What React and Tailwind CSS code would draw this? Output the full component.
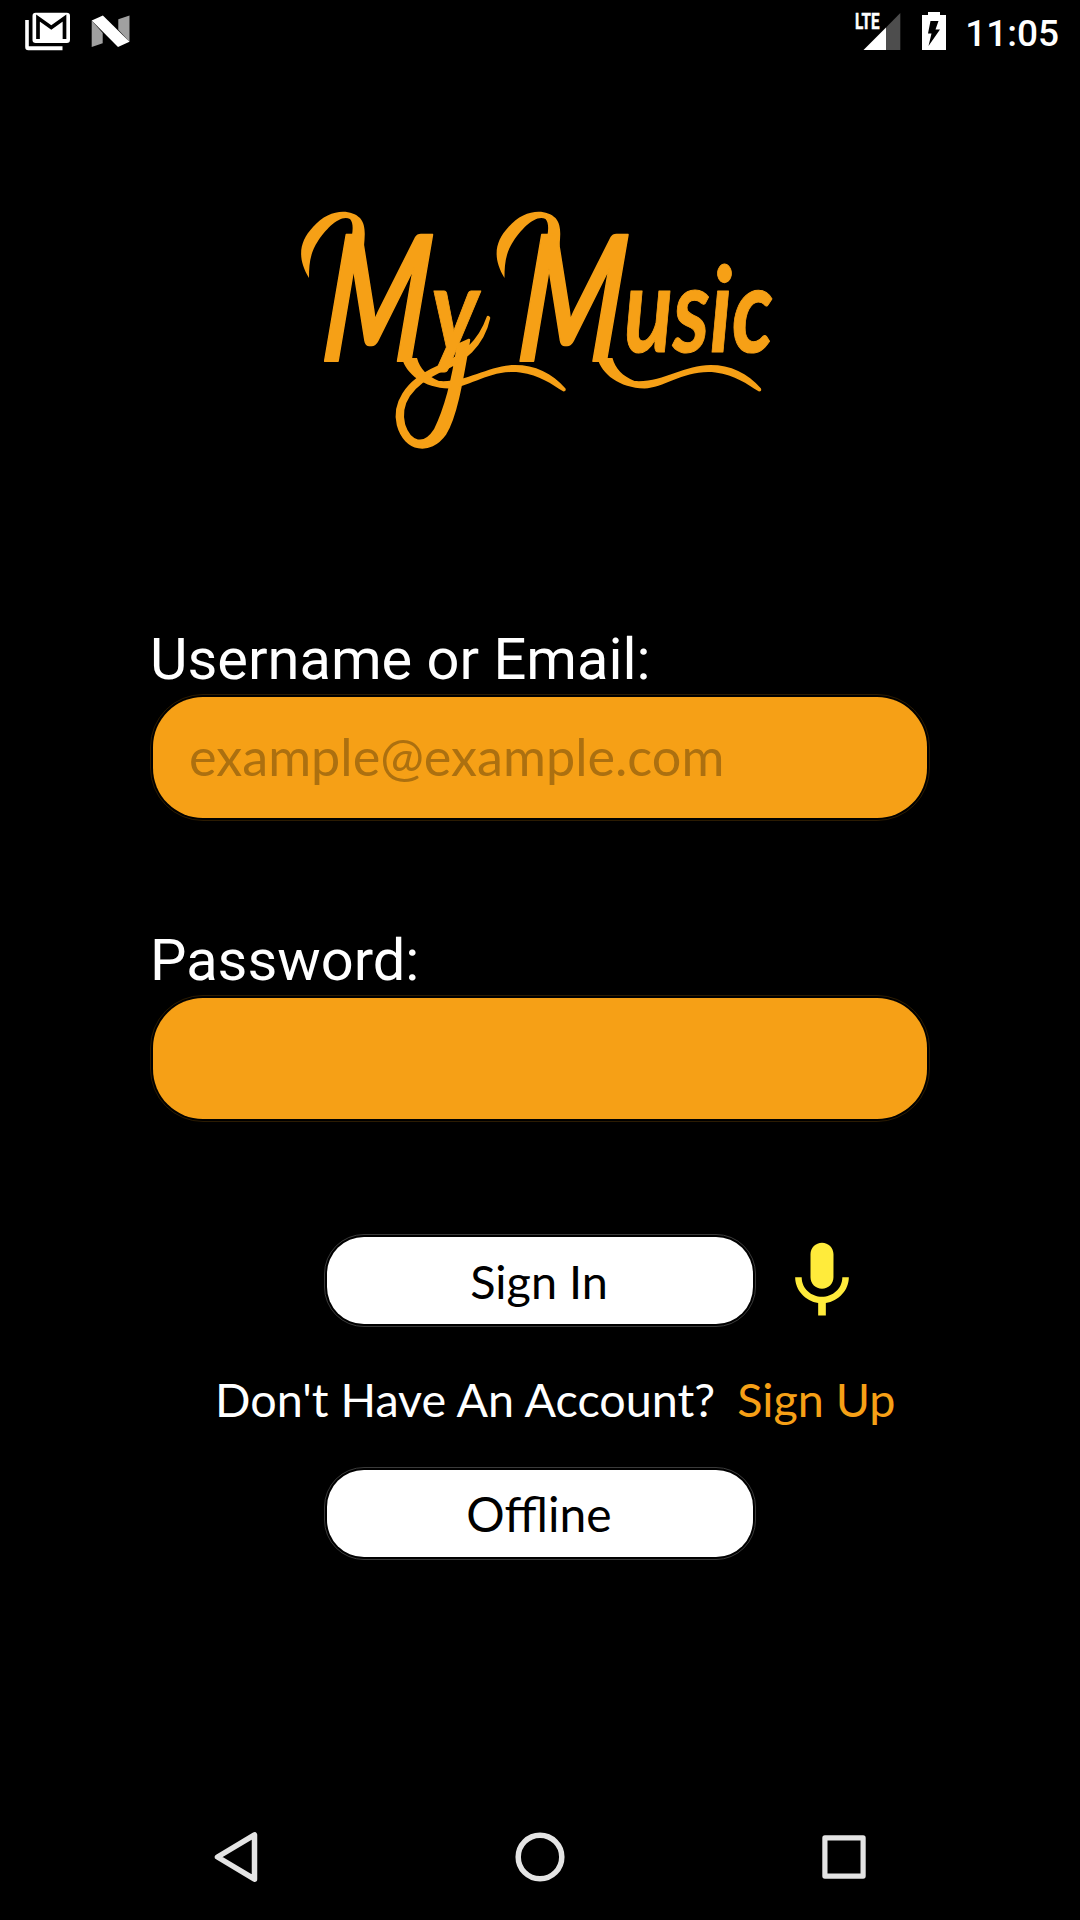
import React from "react";

function StatusBar() {
  return (
    <header className="flex h-16 items-start justify-between pl-[25px] pr-[21px]">
      <div className="flex pt-3">
        <svg width="46" height="40" viewBox="25 12 46 40" aria-label="Mail">
          <path d="M25.2 20h3.6v26.2h33.7v4H28.4q-3.2 0-3.2-3.2z" fill="#fff" />
          <rect x="32.5" y="12.7" width="37.5" height="30.3" rx="3.2" fill="#fff" />
          <path d="M38 39V18l13.3 9.5L64.500 18v21" fill="none" stroke="#000" strokeWidth="3.7" />
        </svg>
        <svg className="ml-5" width="39" height="40" viewBox="91 12 39 40" aria-label="System">
          <path d="M91.700 20.500l11 12.500v10.300l-11 3.700zM118.300 19.300l11.200-3.800v26.300l-11.200-12z" fill="#a0a0a0" />
          <path d="M91.700 20.500l11.200-5 26.600 26.300-11.500 5.200z" fill="#fff" />
        </svg>
      </div>
      <div className="flex pt-3">
        <svg className="overflow-visible" width="48" height="40" viewBox="854 12 48 40" aria-label="LTE signal">
          <path d="M863.500 50L886 27.500V50z" fill="#fff" />
          <path d="M886 27.500L900.300 13v37H886z" fill="#4d4d4d" />
          <text x="855" y="29.200" textLength="24.500" lengthAdjust="spacingAndGlyphs" fill="#fff" stroke="#fff" strokeWidth=".5" className="font-['Roboto'] text-[22px] font-bold">LTE</text>
        </svg>
        <svg className="ml-5" width="24" height="40" viewBox="922 12 24 40" aria-label="Charging">
          <path d="M922 15h6v-3h12v3h6v35h-24z" fill="#fff" />
          <path d="M930.500 21h8l-3 8.500h4.500L928.500 46l3-12.500h-3.500z" fill="#000" />
        </svg>
        <span className="ml-[19px] whitespace-nowrap font-['Roboto',sans-serif] text-[37px] font-medium leading-[44px]">11:05</span>
      </div>
    </header>
  );
}

const swash = "M402 358C406 374 424 388 449 388.500C469 388 490 369 520 372.500C540 375 551 384 563.500 391.500Q566.500 391.500 565.500 388.500C552 373 535 365 515 365C489 365 466 383 439 381C427 376 420 369 417 358Z";
const curl = "M309 278C297 258 299 242 313 227C328 209 350 208 360 218C366 225 365 235 364 246L350 244C353 233 354 223 350 219C340 214 326 229 318 241C310 253 309 264 309 278Z";

function Logo() {
  return (
    <svg className="overflow-visible" width="500" height="260" viewBox="290 200 500 260" fill="#f6a016" aria-label="My Music">
      <path d={curl} />
      <path d={curl} transform="translate(195.500 0)" />
      <path d={swash} />
      <path d={swash} transform="translate(195.500 0)" />
      <path d="M488 317C479 343 462 356 438 367C404 382 393 405 398 425C405 451 430 455 445 434C456 417 462 380 469 340L458 345C453 380 446 408 435 430C424 447 410 443 404 425C399 405 409 386 440 371C464 361 483 346 489 318Z" stroke="#f6a016" strokeWidth="2.500" strokeLinejoin="round" />
      <g className="font-['Lato',sans-serif] font-bold italic" stroke="#f6a016" strokeLinejoin="round">
        <text transform="translate(320 361) skewX(-5) scale(.66 .97)" strokeWidth="2" className="text-[180px]">M</text>
        <text transform="translate(431 352) scale(.82 1)" strokeWidth="1" className="text-[118px]">y</text>
        <text transform="translate(515.500 361) skewX(-5) scale(.66 .97)" strokeWidth="2" className="text-[180px]">M</text>
        <text transform="translate(624 352)" textLength="149" lengthAdjust="spacingAndGlyphs" strokeWidth="1" className="text-[118px]">usic</text>
      </g>
    </svg>
  );
}

function Field({ label, type, placeholder }) {
  return (
    <label className="block">
      <span className="block h-[66px] whitespace-nowrap pt-[2px] font-['Roboto',sans-serif] text-[57.8px] leading-[66px]">{label}</span>
      <span className="mt-1 block h-[127px] rounded-[53px] border border-[#2b1b02] p-[2px]">
        <input
          type={type}
          placeholder={placeholder}
          className="block h-full w-full rounded-[50px] bg-[#f6a016] pb-[5px] pl-[36px] font-['Lato',sans-serif] text-[52.2px] text-black outline-none placeholder:text-[#ac7010] placeholder:opacity-100"
        />
      </span>
    </label>
  );
}

function PillButton({ children }) {
  return (
    <div className="h-[93px] w-[432px] rounded-[40px] border border-[#3a3a3a] p-[2px]">
      <button className="block h-full w-full rounded-[37px] bg-white pr-[2px] pt-px font-['Lato',sans-serif] text-[46.8px] leading-none text-black">{children}</button>
    </div>
  );
}

function NavBar() {
  return (
    <nav className="mt-auto flex h-[126px] items-center justify-between px-[210px]">
      <svg width="50" height="54" viewBox="210 1830 50 54" fill="none" stroke="#e4e4e4" strokeWidth="5.500" strokeLinejoin="round">
        <path d="M254.500 1834.800v44.400L217.500 1857z" />
      </svg>
      <svg width="54" height="54" viewBox="0 0 54 54" fill="none" stroke="#e4e4e4" strokeWidth="5.500">
        <circle cx="27" cy="27" r="21.800" />
      </svg>
      <svg width="50" height="54" viewBox="820 1830 50 54" fill="none" stroke="#e4e4e4" strokeWidth="5.200" strokeLinejoin="round">
        <rect x="824.900" y="1837.900" width="38.200" height="38.200" />
      </svg>
    </nav>
  );
}

export default function App() {
  return (
    <main className="flex h-[1920px] w-[1080px] flex-col overflow-hidden bg-black text-white">
      <StatusBar />
      <div className="mt-[136px] flex h-[260px] justify-center">
        <Logo />
      </div>
      <form className="mx-[150px] mt-[164px] flex flex-col gap-[104px]" onSubmit={(e) => e.preventDefault()}>
        <Field label="Username or Email:" type="text" placeholder="example@example.com" />
        <Field label="Password:" type="password" />
      </form>
      <div className="mt-[112px] flex h-[93px] pl-[324px]">
        <PillButton>Sign In</PillButton>
        <svg className="ml-5 mt-px" width="92" height="92" viewBox="0 0 24 24" fill="#ffeb3b" aria-label="Voice sign in">
          <path d="M12 14c1.660 0 2.990-1.340 2.990-3L15 5c0-1.660-1.340-3-3-3S9 3.340 9 5v6c0 1.660 1.340 3 3 3zm5.300-3c0 3-2.540 5.100-5.300 5.100S6.700 14 6.700 11H5c0 3.410 2.720 6.230 6 6.720V21h2v-3.280c3.280-.480 6-3.300 6-6.720h-1.700z" />
        </svg>
      </div>
      <div className="mt-[44px] flex h-14 items-center gap-[22px] whitespace-nowrap pl-[215px] font-['Lato',sans-serif] text-[46.700px] leading-[56px]">
        <span>Don't Have An Account?</span>
        <a href="#" className="text-[#f6a016]">Sign Up</a>
      </div>
      <div className="mt-[40px] flex justify-center">
        <PillButton><span className="text-[48px]">Offline</span></PillButton>
      </div>
      <NavBar />
    </main>
  );
}
